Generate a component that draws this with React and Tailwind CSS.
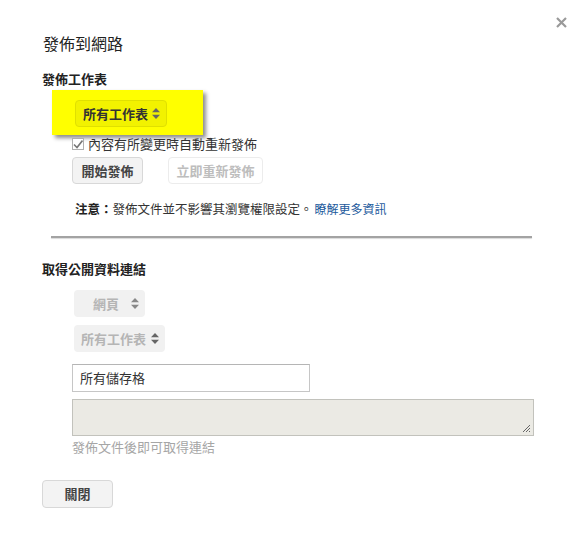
import React from "react";

function UpDown({ className = "" }) {
  return (
    <svg width="8" height="11" viewBox="0 0 8 11" className={className}>
      <path d="M4 0 L8 4.2 L0 4.2 Z" fill="currentColor" />
      <path d="M4 11 L8 6.8 L0 6.8 Z" fill="currentColor" />
    </svg>
  );
}

function SelectBox({ label, width, disabled, highlight }) {
  let cls = "bg-[#f1f1f1] text-[#b5b5b5]";
  if (highlight) cls = "bg-[#f2f200] border border-[#e0e000] text-[#333]";
  return (
    <div
      className={`flex items-center justify-between rounded-sm h-[27px] pl-[7px] pr-[6px] ${cls} ${width}`}
    >
      <span className={`font-bold ${disabled ? "mx-auto" : ""}`}>{label}</span>
      <UpDown className={disabled ? "text-[#888]" : "text-[#666]"} />
    </div>
  );
}

export default function App() {
  return (
    <div
      className="relative w-[584px] h-[541px] bg-white text-[13px] text-[#333] overflow-hidden"
      style={{ fontFamily: '"Noto Sans CJK TC", "Noto Sans", sans-serif' }}
    >
      {/* close */}
      <svg
        width="11"
        height="11"
        viewBox="0 0 11 11"
        className="absolute left-[556px] top-[17px]"
      >
        <path d="M1 1 L10 10 M10 1 L1 10" stroke="#9a9a9a" strokeWidth="2.2" />
      </svg>

      <div className="pl-[42px] pt-[32px]">
        <h1 className="text-[16px] leading-[22px] text-[#222] pl-[1px]">發佈到網路</h1>

        <h2 className="mt-[17px] font-bold text-[#222] leading-[16px]">發佈工作表</h2>

        {/* highlighted select */}
        <div className="mt-[3px] ml-[10px] w-[151px] h-[45px] bg-[#ffff00] shadow-[3px_3px_4px_rgba(0,0,0,0.45)] pt-[10px] pl-[23px]">
          <SelectBox label="所有工作表" width="w-[92px]" highlight />
        </div>

        <div className="ml-[30px]">
          <label className="flex items-center gap-[4px] h-[16px] mt-[1px] leading-[16px]">
            <span className="w-[12px] h-[12px] border border-[#b0b0b0] bg-white flex items-center justify-center">
              <svg width="10" height="9" viewBox="0 0 10 9">
                <path d="M1 4.5 L4 7.5 L9.5 0.5" stroke="#777" strokeWidth="1.6" fill="none" />
              </svg>
            </span>
            <span className="text-[#333]">內容有所變更時自動重新發佈</span>
          </label>

          <div className="flex gap-[25px] mt-[5px]">
            <button className="h-[27px] w-[71px] rounded-sm border border-[#d8d8d8] bg-[#f3f3f3] font-bold text-[#444]">
              開始發佈
            </button>
            <button className="h-[27px] w-[95px] rounded-sm border border-[#ececec] bg-white font-bold text-[#bdbdbd]">
              立即重新發佈
            </button>
          </div>

          <p className="mt-[17px] ml-[3px] leading-[16px] text-[12.5px]">
            <span className="font-bold text-[#222]">注意：</span>
            發佈文件並不影響其瀏覽權限設定。
            <span className="ml-[2px] text-[12px] text-[#1d5a9c]">瞭解更多資訊</span>
          </p>
        </div>

        <div className="mt-[19px] ml-[9px] w-[481px] h-[2px] bg-[#a3a3a3] shadow-[0_1px_1px_rgba(0,0,0,0.15)]" />

        <h2 className="mt-[23px] font-bold text-[#222] leading-[16px]">取得公開資料連結</h2>

        <div className="ml-[32px] mt-[13px] flex flex-col gap-[8px]">
          <SelectBox label="網頁" width="w-[71px]" disabled />
          <SelectBox label="所有工作表" width="w-[91px]" />
        </div>

        <div className="ml-[30px] mt-[12px]">
          <div className="w-[238px] h-[28px] border border-[#c6c6c6] border-t-[#b5b5b5] bg-white flex items-center pl-[7px] text-[#333]">
            所有儲存格
          </div>
          <div className="relative mt-[7px] w-[462px] h-[37px] border border-[#c2c2bc] bg-[#ebeae4]">
            <svg width="9" height="9" viewBox="0 0 9 9" className="absolute right-[2px] bottom-[2px]">
              <path d="M1 8 L8 1 M4 8 L8 4 M7 8 L8 7" stroke="#666" strokeWidth="1" />
            </svg>
          </div>
          <p className="mt-[2px] text-[#a6a6a6] leading-[18px]">發佈文件後即可取得連結</p>
        </div>

        <button className="mt-[24px] h-[28px] w-[71px] rounded-sm border border-[#d8d8d8] bg-[#f3f3f3] font-bold text-[#444]">
          關閉
        </button>
      </div>
    </div>
  );
}
